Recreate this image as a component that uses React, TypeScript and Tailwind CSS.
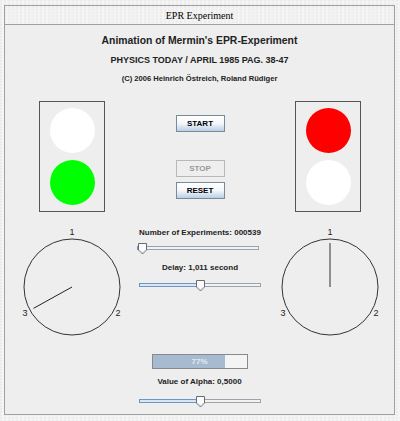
import type { ReactNode } from 'react'

const sans = { fontFamily: '"Liberation Sans", Arial, sans-serif' }

function Lamp({ color }: { color: string }) {
  return <div className={`h-[45px] w-[45px] rounded-full ${color}`} />
}

function TrafficLight({ top, bottom }: { top: string; bottom: string }) {
  return (
    <div className="flex h-[111px] w-[66px] flex-col items-center gap-[7px] border border-[#555] pt-[6px]">
      <Lamp color={top} />
      <Lamp color={bottom} />
    </div>
  )
}

function Btn({ children, disabled }: { children: ReactNode; disabled?: boolean }) {
  return (
    <div
      className={
        disabled
          ? 'flex h-[17px] w-[49px] items-center justify-center border border-[#b8b8b8] bg-[#eeeeee] text-[8px] font-bold text-[#999]'
          : 'flex h-[17px] w-[49px] items-center justify-center border border-[#7a8a99] bg-gradient-to-b from-white via-[#f4f7fb] to-[#b9cfe6] text-[8px] font-bold text-black'
      }
    >
      {children}
    </div>
  )
}

function Slider({ value }: { value: number }) {
  // value 0..1, thumb position along the track
  const left = value * 112
  return (
    <div className="relative h-[12px] w-[122px]">
      <div className="absolute left-0 right-0 top-[3px] h-[4px] border border-[#9aa3ab] bg-[#f2f2f2]" />
      <div
        className="absolute left-0 top-[3px] h-[4px] border border-[#6d95c6] bg-[#dbe6f3]"
        style={{ width: left + 4 }}
      />
      <svg className="absolute top-0" style={{ left }} width="11" height="12" viewBox="0 0 11 12">
        <path d="M1.5 0.5 H9.5 V7 L5.5 11 L1.5 7 Z" fill="#fbfbfb" stroke="#6b6b6b" />
        <path d="M2.5 7 L5.5 10 L8.5 7" fill="none" stroke="#b9cfe6" />
      </svg>
    </div>
  )
}

function Dial({ angle, grey }: { angle: number; grey?: boolean }) {
  const cx = 67
  const cy = 62
  const r = 48
  const len = 44
  const rad = (angle * Math.PI) / 180
  const x2 = cx + len * Math.sin(rad)
  const y2 = cy - len * Math.cos(rad)
  return (
    <svg width="134" height="124" viewBox="0 0 134 124" style={sans}>
      <circle cx={cx} cy={cy} r={r} fill="none" stroke="#333" strokeWidth="1" />
      <line
        x1={cx}
        y1={cy}
        x2={x2}
        y2={y2}
        stroke={grey ? '#777' : '#222'}
        strokeWidth={grey ? 1.6 : 1}
      />
      <text x={cx} y={10} fontSize="9" textAnchor="middle" fill="#222">1</text>
      <text x={cx + 46} y={91} fontSize="9" textAnchor="middle" fill="#222">2</text>
      <text x={cx - 47} y={91} fontSize="9" textAnchor="middle" fill="#222">3</text>
    </svg>
  )
}

export default function App() {
  return (
    <div
      className="h-[421px] w-[400px] overflow-hidden bg-[#f3f3f3] pl-[4px] pr-[5px] pt-[5px] text-black"
      style={{
        ...sans,
        backgroundImage:
          'radial-gradient(circle at 1px 1px, #e2e2e2 0.6px, transparent 0.8px), radial-gradient(circle at 3px 2px, #fafafa 0.6px, transparent 0.8px)',
        backgroundSize: '4px 3px, 5px 4px',
      }}
    >
      <div
        className="flex h-[19px] items-center justify-center border-x border-t border-[#a0a0a0] text-[10px]"
        style={{ fontFamily: '"Liberation Serif", "Times New Roman", serif' }}
      >
        EPR Experiment
      </div>
      <div className="flex h-[391px] flex-col border border-[#a0a0a0] bg-[#eeeeee]">
        <div className="flex flex-col items-center pt-[8px]">
          <div className="text-[10.4px] font-bold leading-[16px] text-[#222]">Animation of Mermin's EPR-Experiment</div>
          <div className="mt-[3px] text-[9px] font-bold leading-[16px] text-[#222]">PHYSICS TODAY / APRIL 1985 PAG. 38-47</div>
          <div className="mt-[3px] text-[7.6px] font-bold leading-[16px] text-[#222]">(C) 2006 Heinrich Östreich, Roland Rüdiger</div>
        </div>

        <div className="mt-[14px] grid grid-cols-[134px_122px_1fr]">
          <div className="flex justify-center">
            <TrafficLight top="bg-white" bottom="bg-[#00ff00]" />
          </div>
          <div className="flex flex-col items-center pt-[14px]">
            <Btn>START</Btn>
            <div className="mt-[28px]">
              <Btn disabled>STOP</Btn>
            </div>
            <div className="mt-[5px]">
              <Btn>RESET</Btn>
            </div>
          </div>
          <div className="flex justify-center pl-[1px]">
            <TrafficLight top="bg-[#ff0000]" bottom="bg-white" />
          </div>
        </div>

        <div className="mt-[13px] grid grid-cols-[134px_122px_1fr]">
          <div className="flex justify-center">
            <Dial angle={-119} />
          </div>
          <div className="flex flex-col items-center pt-[2px]">
            <div className="text-[8px] font-bold leading-[12px] text-[#222]">Number of Experiments: 000539</div>
            <div className="mt-[4px] -ml-[4px]">
              <Slider value={0} />
            </div>
            <div className="mt-[7px] text-[8px] font-bold leading-[12px] text-[#222]">Delay: 1,011 second</div>
            <div className="mt-[6px]">
              <Slider value={0.5} />
            </div>
          </div>
          <div className="flex justify-center pl-[2px]">
            <Dial angle={0} grey />
          </div>
        </div>

        <div className="mt-[5px] flex flex-col items-center">
          <div className="relative h-[15px] w-[96px] border border-[#8a8a8a] bg-[#f4f4f4]">
            <div className="h-full w-[77%] bg-[#a7bbd0]" />
            <div className="absolute inset-0 flex items-center justify-center text-[8px] font-bold text-[#e4ecf4]">77%</div>
          </div>
          <div className="mt-[7px] text-[8px] font-bold leading-[12px] text-[#222]">Value of Alpha: 0,5000</div>
          <div className="mt-[8px]">
            <Slider value={0.5} />
          </div>
        </div>
      </div>
    </div>
  )
}
